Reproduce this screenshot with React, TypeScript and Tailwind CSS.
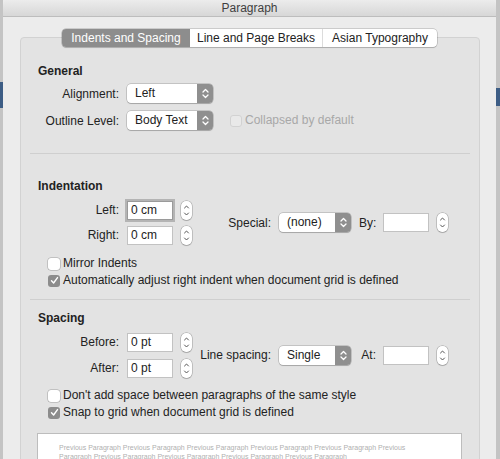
import React from "react";

const Chevrons = () => (
  <svg width="7" height="11" viewBox="0 0 7 11" fill="none" stroke="white" strokeWidth="1.3" strokeLinecap="round" strokeLinejoin="round">
    <path d="M1 4 L3.5 1.5 L6 4" />
    <path d="M1 7 L3.5 9.5 L6 7" />
  </svg>
);

const Stepper = () => (
  <div className="flex h-[19px] w-[11px] items-center justify-center rounded-[5px] bg-white shadow-[0_0_0_0.5px_rgba(0,0,0,0.3),0_1px_1px_rgba(0,0,0,0.12)]">
    <svg width="7" height="13" viewBox="0 0 7 13" fill="none" stroke="#555" strokeWidth="1" strokeLinecap="round" strokeLinejoin="round">
      <path d="M1.5 4 L3.5 2 L5.5 4" />
      <path d="M1.5 9 L3.5 11 L5.5 9" />
    </svg>
  </div>
);

const Popup = ({ label, className }: { label: string; className: string }) => (
  <div className={`flex h-[19px] items-stretch rounded-[4px] bg-white shadow-[0_0_0_0.5px_rgba(0,0,0,0.28),0_1px_1px_rgba(0,0,0,0.15)] ${className}`}>
    <span className="flex-1 pl-[8px] leading-[19px] text-[#222]">{label}</span>
    <span className="flex w-[16px] items-center justify-center rounded-r-[4px] bg-[#8f8f8f]">
      <Chevrons />
    </span>
  </div>
);

const Field = ({ value, focused }: { value?: string; focused?: boolean }) => (
  <div
    className={`h-[19px] w-[46px] border bg-white pl-[3px] leading-[17px] text-[#222] ${
      focused ? "border-[#9a9a9a] outline outline-2 outline-[#b4b4b4]" : "border-[#c2c2c2]"
    }`}
  >
    {value}
  </div>
);

const Check = ({ checked, label, disabled }: { checked?: boolean; label: string; disabled?: boolean }) => (
  <div className="flex h-[13px] items-center">
    <div
      className={`flex h-[12px] w-[12px] items-center justify-center rounded-[3px] ${
        checked
          ? "bg-[#8c8c8c]"
          : disabled
          ? "border border-[#d2d2d2] bg-[#e9e9e9]"
          : "bg-white shadow-[0_0_0_0.5px_rgba(0,0,0,0.3)]"
      }`}
    >
      {checked && (
        <svg width="9" height="9" viewBox="0 0 9 9" fill="none" stroke="white" strokeWidth="1.4" strokeLinecap="round" strokeLinejoin="round">
          <path d="M1.5 4.8 L3.6 7 L7.5 1.6" />
        </svg>
      )}
    </div>
    <span className={`ml-[3px] leading-[13px] ${disabled ? "text-[#a8a8a8]" : "text-[#222]"}`}>{label}</span>
  </div>
);

const Label = ({ children }: { children: React.ReactNode }) => (
  <span className="w-[81px] text-right text-[#222]">{children}</span>
);

const FieldRow = ({ label, value, focused, className }: { label: string; value: string; focused?: boolean; className?: string }) => (
  <div className={`flex h-[20px] items-center ${className ?? ""}`}>
    <Label>{label}</Label>
    <div className="ml-[8px]">
      <Field value={value} focused={focused} />
    </div>
    <div className="ml-[8px]">
      <Stepper />
    </div>
  </div>
);

const RightGroup = ({ label, popup, small }: { label: string; popup: string; small: string }) => (
  <div className="ml-[9px] flex items-center">
    <div className="flex w-[70px] justify-end whitespace-nowrap text-[#222]">{label}</div>
    <Popup label={popup} className="ml-[8px] w-[72px]" />
    <span className="ml-[8px] w-[17px] text-right text-[#222]">{small}</span>
    <div className="ml-[7px]">
      <Field />
    </div>
    <div className="ml-[8px]">
      <Stepper />
    </div>
  </div>
);

const Divider = ({ className }: { className: string }) => (
  <div className={`mx-[9px] h-px bg-[#cfcfcf] ${className}`} />
);

const prevLine1 = "Previous Paragraph Previous Paragraph Previous Paragraph Previous Paragraph Previous Paragraph Previous";
const prevLine2 = "Paragraph Previous Paragraph Previous Paragraph Previous Paragraph Previous Paragraph";

export default function App() {
  return (
    <div className="flex h-[459px] w-[500px] overflow-hidden bg-[#c4c4c4] font-['Liberation_Sans',Arial,sans-serif] text-[12px]">
      <div className="flex w-[3px] flex-col">
        <div className="h-[82px]" />
        <div className="h-[26px] bg-[#3d5d85]" />
      </div>

      <div className="flex w-[493px] flex-col bg-[#ececec]">
        <div className="flex h-[17px] items-center justify-center rounded-t-[5px] border-b border-[#bdbdbd] bg-gradient-to-b from-[#ececec] to-[#d7d7d7]">
          <span className="leading-[16px] text-[#3f3f3f]">Paragraph</span>
        </div>

        <div className="relative z-10 mt-[12px] flex justify-center">
          <div className="flex h-[18px] overflow-hidden rounded-[4px] bg-white shadow-[0_0_0_0.5px_rgba(0,0,0,0.28),0_1px_1px_rgba(0,0,0,0.12)]">
            <div className="flex w-[128px] items-center justify-center bg-[#8d8d8d] text-white">Indents and Spacing</div>
            <div className="flex w-[132px] items-center justify-center text-[#222]">Line and Page Breaks</div>
            <div className="flex w-[115px] items-center justify-center border-l border-[#dcdcdc] text-[#222]">Asian Typography</div>
          </div>
        </div>

        <div className="-mt-[10px] ml-[17px] flex w-[460px] flex-1 flex-col rounded-t-[4px] border border-[#d2d2d2] bg-[#e3e3e3] pt-[25px]">
          {/* General */}
          <div className="flex flex-col pl-[17px]">
            <div className="h-[16px] font-bold leading-[16px] text-[#222]">General</div>
            <div className="mt-[5px] flex h-[19px] items-center">
              <Label>Alignment:</Label>
              <Popup label="Left" className="ml-[8px] w-[86px]" />
            </div>
            <div className="mt-[8px] flex h-[19px] items-center">
              <Label>Outline Level:</Label>
              <Popup label="Body Text" className="ml-[8px] w-[86px]" />
              <div className="ml-[17px]">
                <Check label="Collapsed by default" disabled />
              </div>
            </div>
          </div>

          <Divider className="mt-[23px]" />

          {/* Indentation */}
          <div className="flex flex-col pl-[17px]">
            <div className="mt-[24px] h-[16px] font-bold leading-[16px] text-[#222]">Indentation</div>
            <div className="mt-[6px] flex items-center">
              <div className="flex flex-col">
                <FieldRow label="Left:" value="0 cm" focused />
                <FieldRow label="Right:" value="0 cm" className="mt-[5px]" />
              </div>
              <RightGroup label="Special:" popup="(none)" small="By:" />
            </div>
            <div className="mt-[12px] pl-[10px]">
              <Check label="Mirror Indents" />
            </div>
            <div className="mt-[4px] pl-[10px]">
              <Check label="Automatically adjust right indent when document grid is defined" checked />
            </div>
          </div>

          <Divider className="mt-[12px]" />

          {/* Spacing */}
          <div className="flex flex-col pl-[17px]">
            <div className="mt-[10px] h-[16px] font-bold leading-[16px] text-[#222]">Spacing</div>
            <div className="mt-[6px] flex items-center">
              <div className="flex flex-col">
                <FieldRow label="Before:" value="0 pt" />
                <FieldRow label="After:" value="0 pt" className="mt-[6px]" />
              </div>
              <RightGroup label="Line spacing:" popup="Single" small="At:" />
            </div>
            <div className="mt-[11px] pl-[10px]">
              <Check label="Don't add space between paragraphs of the same style" />
            </div>
            <div className="mt-[4px] pl-[10px]">
              <Check label="Snap to grid when document grid is defined" checked />
            </div>
          </div>

          <div className="ml-[16px] mt-[14px] w-[425px] flex-1 border border-[#bdbdbd] bg-white pl-[21px] pt-[9px] text-[7px] leading-[9px] text-[#b0b0b0]">
            <div className="whitespace-nowrap">{prevLine1}</div>
            <div className="whitespace-nowrap">{prevLine2}</div>
          </div>
        </div>
      </div>

      <div className="flex w-[4px] flex-col">
        <div className="h-[88px]" />
        <div className="h-[18px] bg-[#3d5d85]" />
      </div>
    </div>
  );
}
